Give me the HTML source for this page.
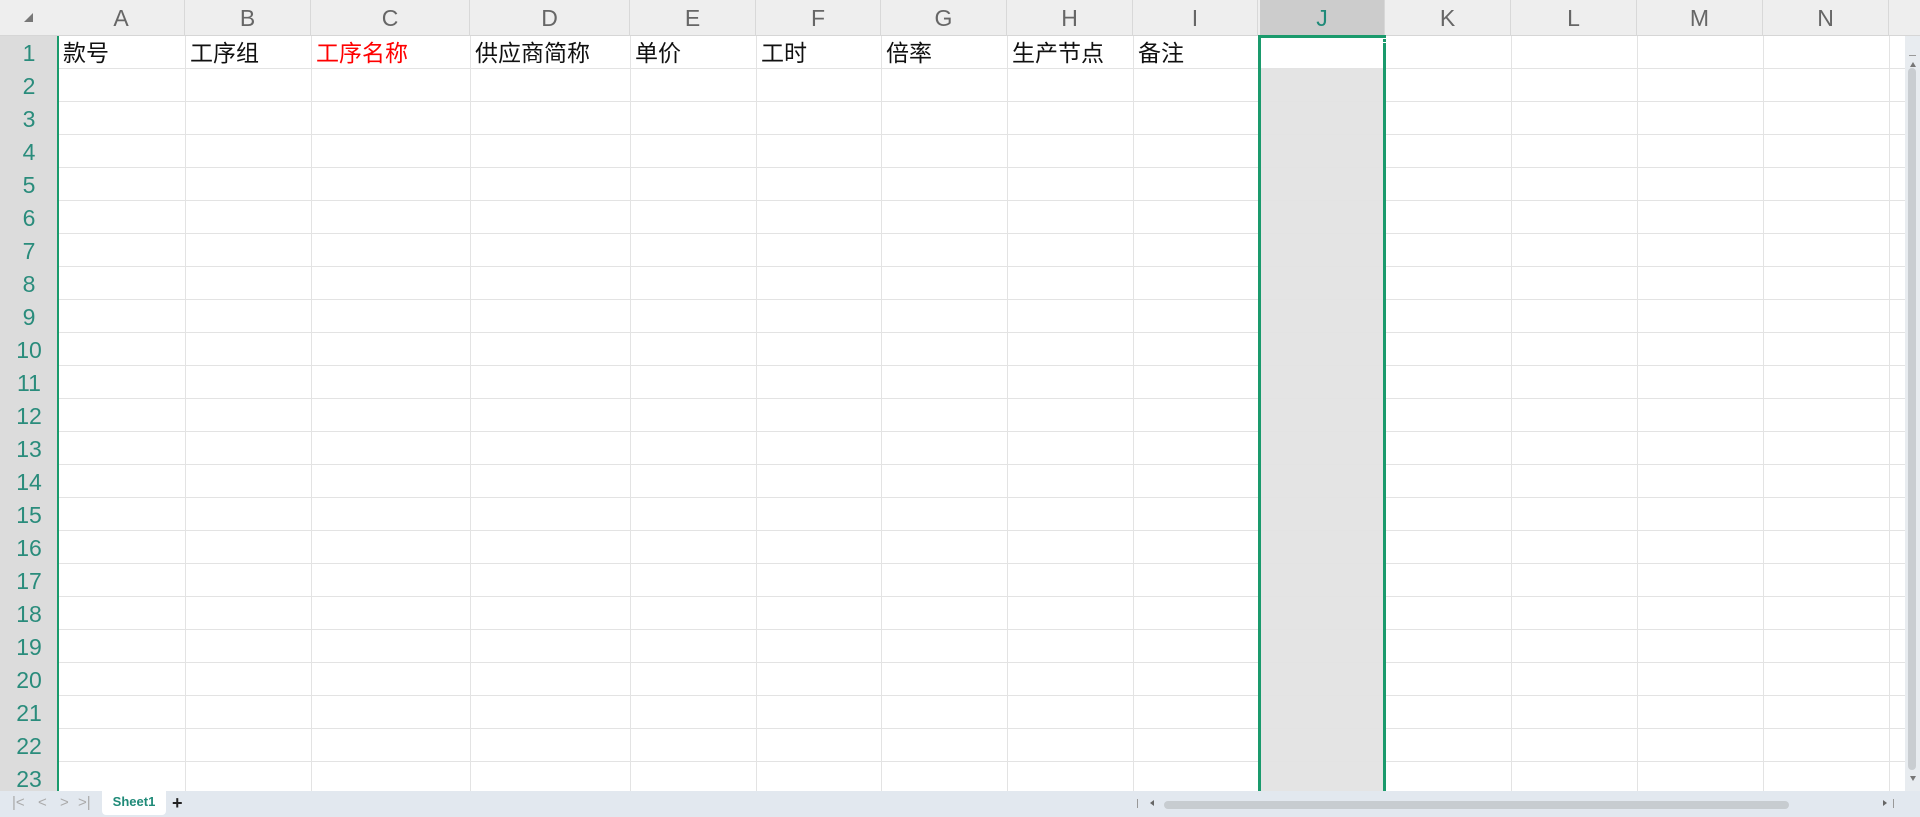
<!DOCTYPE html>
<html><head><meta charset="utf-8"><style>
*{margin:0;padding:0;box-sizing:border-box}
body{width:1920px;height:817px;overflow:hidden;background:#fff;position:relative;font-family:"Liberation Sans","Noto Sans CJK SC",sans-serif}
.a{position:absolute}
#ch{left:0;top:0;width:1920px;height:36px;background:#eeeeee;border-bottom:1px solid #d6d6d6}
.colh{position:absolute;top:0;height:36px;border-right:1px solid #d8d8d8;text-align:center;line-height:36px;font-size:23px;color:#666}
#rh{left:0;top:36px;width:58px;height:755px;background:#dcdcdc}
.rn{position:absolute;left:0;width:58px;height:33px;line-height:34px;text-align:center;font-size:23px;color:#2a8c7c}
#grid{left:58px;top:36px;width:1847px;height:755px;background:repeating-linear-gradient(to bottom,transparent 0 32px,#e3e3e3 32px 33px)}
.vl{position:absolute;top:36px;height:755px;width:1px;background:#e3e3e3}
.t{position:absolute;top:36px;height:33px;line-height:34px;font-size:23px;color:#111;font-family:"Liberation Sans","Noto Sans CJK SC",sans-serif}
#tab{left:0;top:791px;width:1920px;height:26px;background:#e2e8ef}
.nav{position:absolute;top:3px;font-size:15px;color:#aaa}
</style></head><body>
<div id="ch" class="a">
<div class="a" style="left:24px;top:13px;width:0;height:0;border-left:9px solid transparent;border-bottom:9px solid #777"></div>
<div class="colh" style="left:58px;width:127px">A</div>
<div class="colh" style="left:185px;width:126px">B</div>
<div class="colh" style="left:311px;width:159px">C</div>
<div class="colh" style="left:470px;width:160px">D</div>
<div class="colh" style="left:630px;width:126px">E</div>
<div class="colh" style="left:756px;width:125px">F</div>
<div class="colh" style="left:881px;width:126px">G</div>
<div class="colh" style="left:1007px;width:126px">H</div>
<div class="colh" style="left:1133px;width:125px">I</div>
<div class="colh" style="left:1260px;width:125px;background:#cccccc;color:#1f8a78">J</div>
<div class="colh" style="left:1385px;width:126px">K</div>
<div class="colh" style="left:1511px;width:126px">L</div>
<div class="colh" style="left:1637px;width:126px">M</div>
<div class="colh" style="left:1763px;width:126px">N</div>
</div>
<div id="rh" class="a">
<div class="rn" style="top:0">1</div><div class="rn" style="top:33px">2</div><div class="rn" style="top:66px">3</div><div class="rn" style="top:99px">4</div><div class="rn" style="top:132px">5</div><div class="rn" style="top:165px">6</div><div class="rn" style="top:198px">7</div><div class="rn" style="top:231px">8</div><div class="rn" style="top:264px">9</div><div class="rn" style="top:297px">10</div><div class="rn" style="top:330px">11</div><div class="rn" style="top:363px">12</div><div class="rn" style="top:396px">13</div><div class="rn" style="top:429px">14</div><div class="rn" style="top:462px">15</div><div class="rn" style="top:495px">16</div><div class="rn" style="top:528px">17</div><div class="rn" style="top:561px">18</div><div class="rn" style="top:594px">19</div><div class="rn" style="top:627px">20</div><div class="rn" style="top:660px">21</div><div class="rn" style="top:693px">22</div><div class="rn" style="top:726px">23</div>
</div>
<div class="a" style="left:1260px;top:69px;width:125px;height:722px;background:#e4e4e4"></div>
<div id="grid" class="a"></div>
<div class="vl" style="left:185px"></div><div class="vl" style="left:311px"></div><div class="vl" style="left:470px"></div><div class="vl" style="left:630px"></div><div class="vl" style="left:756px"></div><div class="vl" style="left:881px"></div><div class="vl" style="left:1007px"></div><div class="vl" style="left:1133px"></div><div class="vl" style="left:1258px"></div><div class="vl" style="left:1385px"></div><div class="vl" style="left:1511px"></div><div class="vl" style="left:1637px"></div><div class="vl" style="left:1763px"></div><div class="vl" style="left:1889px"></div>
<div class="a" style="left:57px;top:36px;width:2px;height:755px;background:#1a9a6c"></div>
<div class="a" style="left:1258px;top:36px;width:3px;height:755px;background:#1a9a6c"></div>
<div class="a" style="left:1383px;top:36px;width:3px;height:755px;background:#1a9a6c"></div>
<div class="a" style="left:1258px;top:35px;width:128px;height:3px;background:#1a9a6c"></div>
<div class="a" style="left:1382px;top:38px;width:5px;height:5px;background:#1a9a6c;border:1px solid #fff"></div>
<div class="t" style="left:63px">款号</div>
<div class="t" style="left:190px">工序组</div>
<div class="t" style="left:316px;color:#ff0000">工序名称</div>
<div class="t" style="left:475px">供应商简称</div>
<div class="t" style="left:635px">单价</div>
<div class="t" style="left:761px">工时</div>
<div class="t" style="left:886px">倍率</div>
<div class="t" style="left:1012px">生产节点</div>
<div class="t" style="left:1138px">备注</div>
<div class="a" style="left:1905px;top:36px;width:15px;height:755px;background:#e8ecf0"></div>
<div class="a" style="left:1909px;top:55px;width:7px;height:1px;background:#999"></div>
<div class="a" style="left:1910px;top:62px;width:0;height:0;border-left:3px solid transparent;border-right:3px solid transparent;border-bottom:5px solid #777"></div>
<div class="a" style="left:1908px;top:68px;width:8px;height:702px;border-radius:4px;background:#c9cdd1"></div>
<div class="a" style="left:1910px;top:776px;width:0;height:0;border-left:3px solid transparent;border-right:3px solid transparent;border-top:5px solid #777"></div>
<div id="tab" class="a">
<div class="nav" style="left:12px">|&lt;</div>
<div class="nav" style="left:38px">&lt;</div>
<div class="nav" style="left:60px">&gt;</div>
<div class="nav" style="left:78px">&gt;|</div>
<div class="a" style="left:102px;top:0;width:64px;height:24px;background:#fff;border-radius:0 0 4px 4px;text-align:center;line-height:22px;font-size:13px;font-weight:bold;color:#1f8a78">Sheet1</div>
<div class="a" style="left:172px;top:0;font-size:18px;line-height:24px;color:#222;font-weight:bold">+</div>
<div class="a" style="left:1137px;top:8px;width:1px;height:9px;background:#999"></div>
<div class="a" style="left:1150px;top:9px;width:0;height:0;border-top:3px solid transparent;border-bottom:3px solid transparent;border-right:4px solid #666"></div>
<div class="a" style="left:1164px;top:10px;width:625px;height:8px;border-radius:4px;background:#c7ccd0"></div>
<div class="a" style="left:1883px;top:9px;width:0;height:0;border-top:3px solid transparent;border-bottom:3px solid transparent;border-left:4px solid #666"></div>
<div class="a" style="left:1893px;top:8px;width:1px;height:9px;background:#999"></div>
</div>
</body></html>
